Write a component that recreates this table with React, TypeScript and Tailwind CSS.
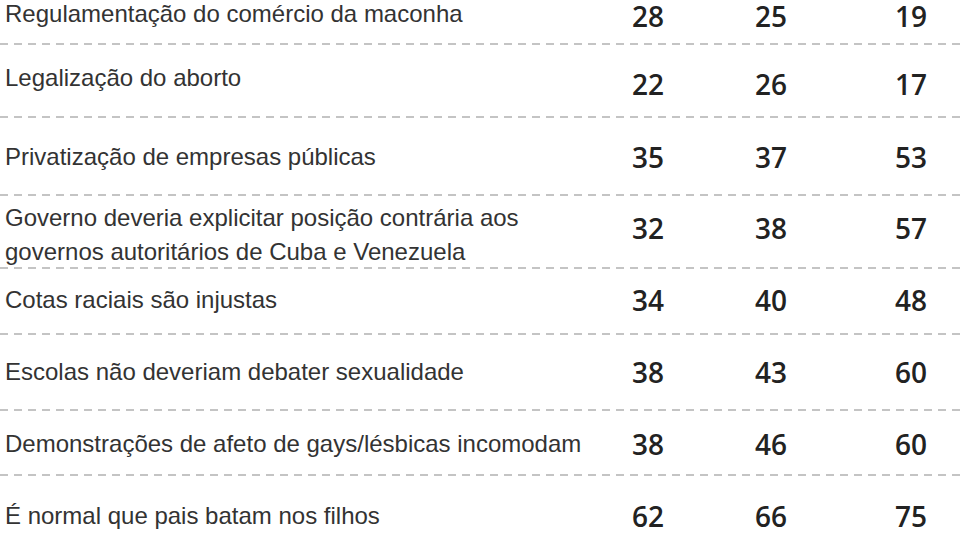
const rows = [
  { label: ['Regulamentação do comércio da maconha'], values: [28, 25, 19], h: 'h-[43px]', pt: 'pt-0', numPt: 'pt-0' },
  { label: ['Legalização do aborto'], values: [22, 26, 17], h: 'h-[71px]', pt: 'pt-[16px]', numPt: 'pt-[21px]' },
  { label: ['Privatização de empresas públicas'], values: [35, 37, 53], h: 'h-[76px]', pt: 'pt-[22px]', numPt: 'pt-[21px]' },
  {
    label: ['Governo deveria explicitar posição contrária aos', 'governos autoritários de Cuba e Venezuela'],
    values: [32, 38, 57],
    h: 'h-[71px]',
    pt: 'pt-[5px]',
    numPt: 'pt-[14px]',
  },
  { label: ['Cotas raciais são injustas'], values: [34, 40, 48], h: 'h-[64px]', pt: 'pt-[14px]', numPt: 'pt-[13px]' },
  { label: ['Escolas não deveriam debater sexualidade'], values: [38, 43, 60], h: 'h-[74px]', pt: 'pt-[20px]', numPt: 'pt-[19px]' },
  { label: ['Demonstrações de afeto de gays/lésbicas incomodam'], values: [38, 46, 60], h: 'h-[63px]', pt: 'pt-[16px]', numPt: 'pt-[15px]' },
  { label: ['É normal que pais batam nos filhos'], values: [62, 66, 75], h: 'h-[64px]', pt: 'pt-[23px]', numPt: 'pt-[22px]' },
];

function Dashes() {
  return <div className="h-[2px] w-full bg-[repeating-linear-gradient(90deg,#c4c4c4_0_8px,transparent_8px_14px)]" />;
}

export default function App() {
  return (
    <div className="w-[960px] h-[540px] overflow-hidden bg-white">
      {rows.map((row, i) => (
        <div key={i}>
          <div className={`flex ${row.h}`}>
            <div
              className={`flex-1 pl-[5px] ${row.pt} text-[24px] ${i === 0 ? 'leading-[28px]' : 'leading-[34px]'} text-[#333] font-['Liberation_Sans',Arial,sans-serif]`}
            >
              {row.label.map((l, j) => (
                <div key={j}>{l}</div>
              ))}
            </div>
            <div
              className={`flex ${row.numPt} text-[28px] ${i === 0 ? 'leading-[32px]' : 'leading-[36px]'} font-semibold text-[#222] font-['Open_Sans',sans-serif]`}
            >
              <div className="w-[80px] text-center">{row.values[0]}</div>
              <div className="ml-[43px] w-[80px] text-center">{row.values[1]}</div>
              <div className="ml-[60px] w-[80px] text-center">{row.values[2]}</div>
              <div className="w-[9px]" />
            </div>
          </div>
          {i < rows.length - 1 && <Dashes />}
        </div>
      ))}
    </div>
  );
}
